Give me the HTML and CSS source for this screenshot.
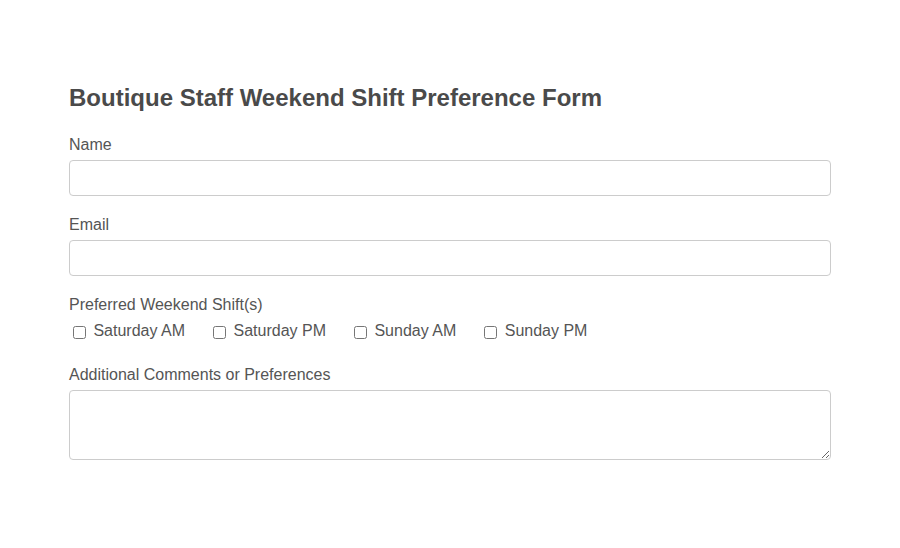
FILE: index.html
```html
<!DOCTYPE html>
<html lang="en">
<head>
<meta charset="utf-8">
<title>Boutique Staff Weekend Shift Preference Form</title>
<link rel="stylesheet" href="styles.css">
</head>
<body>
<form class="form">
  <h2 class="title">Boutique Staff Weekend Shift Preference Form</h2>
  <div class="group">
    <label class="label" for="name">Name</label>
    <input class="input" type="text" id="name">
  </div>
  <div class="group">
    <label class="label" for="email">Email</label>
    <input class="input" type="email" id="email">
  </div>
  <div class="group">
    <div class="label label-tight">Preferred Weekend Shift(s)</div>
    <div class="options">
      <label class="option"><input type="checkbox" class="check"> Saturday AM</label>
      <label class="option"><input type="checkbox" class="check"> Saturday PM</label>
      <label class="option"><input type="checkbox" class="check"> Sunday AM</label>
      <label class="option"><input type="checkbox" class="check"> Sunday PM</label>
    </div>
  </div>
  <div class="group">
    <label class="label" for="comments">Additional Comments or Preferences</label>
    <textarea class="input textarea" id="comments"></textarea>
  </div>
</form>
</body>
</html>
```
FILE: styles.css
```css
html, body {
  margin: 0;
  padding: 0;
  background: #ffffff;
}
body {
  font-family: "Liberation Sans", Arial, sans-serif;
  color: #555555;
}
.form {
  width: 762px;
  margin: 0 auto;
  padding-top: 84px;
}
.title {
  margin: 0 0 24px;
  font-size: 24px;
  line-height: 28px;
  font-weight: bold;
  color: #4a4a4a;
}
.group {
  margin-bottom: 20px;
}
.label {
  display: block;
  font-size: 16px;
  line-height: 18px;
  margin-bottom: 6px;
}
.label-tight {
  margin-bottom: 0;
}
.input {
  display: block;
  box-sizing: border-box;
  width: 100%;
  height: 36px;
  margin: 0;
  padding: 8px;
  border: 1px solid #cccccc;
  border-radius: 4px;
  font-family: inherit;
  font-size: 16px;
  background: #ffffff;
}
.textarea {
  height: 70px;
  resize: vertical;
}
.options {
  display: flex;
  padding-top: 8px;
  padding-bottom: 6px;
}
.option {
  font-size: 16px;
  line-height: 18px;
  margin-right: 24px;
  white-space: pre;
}
.check {
  margin: 3px 3px 0 4px;
  vertical-align: -3px;
}
```
